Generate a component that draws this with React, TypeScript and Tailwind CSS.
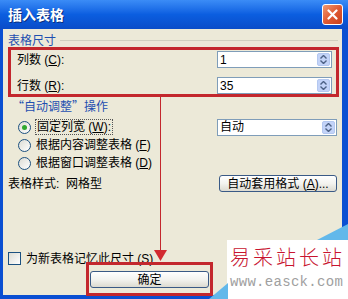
import React from 'react';

const ui = "font-['Liberation_Sans','Noto_Sans_CJK_SC',sans-serif]";

function SpinBox({ value, width }: { value: string; width: string }) {
  return (
    <div className={`flex h-[17px] ${width} items-center border border-[#7f9db9] bg-white`}>
      <span className="flex-1 pl-[2px] text-[12px] leading-[14px] text-black">{value}</span>
      <div className="mr-[1px] flex h-[13px] w-[13px] flex-col items-center justify-center gap-[1px] rounded-[2px] border border-[#b4c8f0] bg-[#c3d3f8]">
        <svg width="7" height="4" viewBox="0 0 7 4">
          <path d="M0.5 3.5 L3.5 0.5 L6.5 3.5" fill="none" stroke="#4d6185" strokeWidth="1.4" />
        </svg>
        <svg width="7" height="4" viewBox="0 0 7 4">
          <path d="M0.5 0.5 L3.5 3.5 L6.5 0.5" fill="none" stroke="#4d6185" strokeWidth="1.4" />
        </svg>
      </div>
    </div>
  );
}

function Radio({ checked }: { checked?: boolean }) {
  return (
    <span className="flex h-[13px] w-[13px] items-center justify-center rounded-full border border-[#1c5180] bg-gradient-to-br from-[#dcdcd4] to-white">
      {checked && <span className="h-[5px] w-[5px] rounded-full bg-[#2fa82f]" />}
    </span>
  );
}

function XpButton({ children, width }: { children: React.ReactNode; width: string }) {
  return (
    <div
      className={`flex h-[17px] ${width} items-center justify-center rounded-[3px] border border-[#3a5a86] bg-gradient-to-b from-white via-[#f3f3ef] to-[#dcdad0] text-[12px] leading-[14px] text-black`}
    >
      {children}
    </div>
  );
}

export default function App() {
  return (
    <div className={`relative flex h-[299px] w-[348px] flex-col overflow-hidden bg-[#0a4fd2] ${ui}`}>
      {/* Title bar */}
      <div className="flex h-[29px] items-center justify-between bg-gradient-to-b from-[#3b8cf6] via-[#0b5ee0] to-[#0a4cc8] pl-[8px] pr-[5px]">
        <span className="text-[14px] font-bold leading-[16px] text-white [text-shadow:1px_1px_0_#0a2f80]">插入表格</span>
        <div className="flex h-[21px] w-[21px] items-center justify-center rounded-[3px] border border-white bg-gradient-to-br from-[#f0986e] via-[#e05a33] to-[#c8401c]">
          <svg width="11" height="11" viewBox="0 0 11 11">
            <path d="M1.5 1.5 L9.5 9.5 M9.5 1.5 L1.5 9.5" stroke="white" strokeWidth="2.2" strokeLinecap="round" />
          </svg>
        </div>
      </div>

      {/* Body */}
      <div className="mb-[4px] ml-[3px] mr-[6px] flex flex-1 flex-col bg-[#ece9d8] pt-[5px] text-[12px] leading-[14px] text-black">
        <div className="flex h-[13px] items-center pl-[5px]">
          <span className="text-[#1f4fb0]">表格尺寸</span>
          <span className="ml-[4px] mr-[4px] h-px flex-1 bg-[#d0d0bf]" />
        </div>

        <div className="ml-[5px] flex h-[50px] w-[331px] flex-col gap-[9px] border-[3px] border-[#c3272d] pl-[6px] pr-[4px] pt-[1px]">
          <div className="flex h-[17px] items-center justify-between">
            <span>列数 (<u>C</u>):</span>
            <SpinBox value="1" width="w-[115px]" />
          </div>
          <div className="flex h-[17px] items-center justify-between">
            <span>行数 (<u>R</u>):</span>
            <SpinBox value="35" width="w-[115px]" />
          </div>
        </div>

        <div className="mt-[2px] flex h-[14px] items-center pl-[9px]">
          <span className="text-[#1f4fb0] font-['Noto_Sans_CJK_SC',sans-serif]">“自动调整”操作</span>
        </div>

        <div className="mt-[5px] flex flex-col">
          <div className="flex h-[18px] items-center justify-between pl-[15px] pr-[5px]">
            <div className="flex items-center gap-[4px]">
              <Radio checked />
              <span className="border border-dotted border-[#555] px-[1px]">固定列宽 (<u>W</u>):</span>
            </div>
            <SpinBox value="自动" width="w-[120px]" />
          </div>
          <div className="flex h-[18px] items-center gap-[5px] pl-[15px]">
            <Radio />
            <span>根据内容调整表格 (<u>F</u>)</span>
          </div>
          <div className="flex h-[18px] items-center gap-[5px] pl-[15px]">
            <Radio />
            <span>根据窗口调整表格 (<u>D</u>)</span>
          </div>
        </div>

        <div className="mt-[3px] flex h-[17px] items-center justify-between pl-[5px] pr-[5px]">
          <span>表格样式:&nbsp;&nbsp;网格型</span>
          <XpButton width="w-[118px]">
            自动套用格式 (<u>A</u>)...
          </XpButton>
        </div>

        <div className="flex-1" />

        <div className="flex h-[13px] items-center gap-[5px] pl-[5px]">
          <span className="h-[13px] w-[13px] border border-[#1c5180] bg-gradient-to-br from-[#dcdcd4] to-white" />
          <span>为新表格记忆此尺寸 (<u>S</u>)</span>
        </div>
        <div className="mt-[6px] flex pl-[87px] pb-[7px]">
          <XpButton width="w-[119px]">确定</XpButton>
        </div>
      </div>

      {/* Red annotations */}
      <div className="absolute left-[160px] top-[97px] h-[155px] w-[1px] bg-[#c3272d]" />
      <svg className="absolute left-[154px] top-[250px]" width="13" height="11" viewBox="0 0 13 11">
        <path d="M0 0 L13 0 L6.5 11 Z" fill="#d22a30" />
      </svg>
      <div className="absolute left-[86px] top-[262px] h-[34px] w-[127px] border-[3px] border-[#c3272d]" />

      {/* Watermark */}
      <svg className="absolute left-[205px] top-[220px]" width="143" height="79" viewBox="0 0 143 79">
        <polygon points="22,20 143,20 143,79 22,79" fill="white" />
        <polygon points="112,20 143,4 143,20" fill="#62b8ea" />
        <polygon points="4,79 23,63 23,79" fill="#62b8ea" />
      </svg>
      <div className="absolute left-[230px] top-[245px] flex w-[118px] flex-col">
        <span className="text-[20px] font-light leading-[24px] tracking-[3px] text-[#c8142f] font-['Noto_Sans_CJK_SC',serif]">易采站长站</span>
        <span className="mt-[5px] text-[14px] leading-[16px] tracking-[0.3px] text-[#a0a0a0] font-['Liberation_Mono',monospace]">www.easck.com</span>
      </div>
    </div>
  );
}
